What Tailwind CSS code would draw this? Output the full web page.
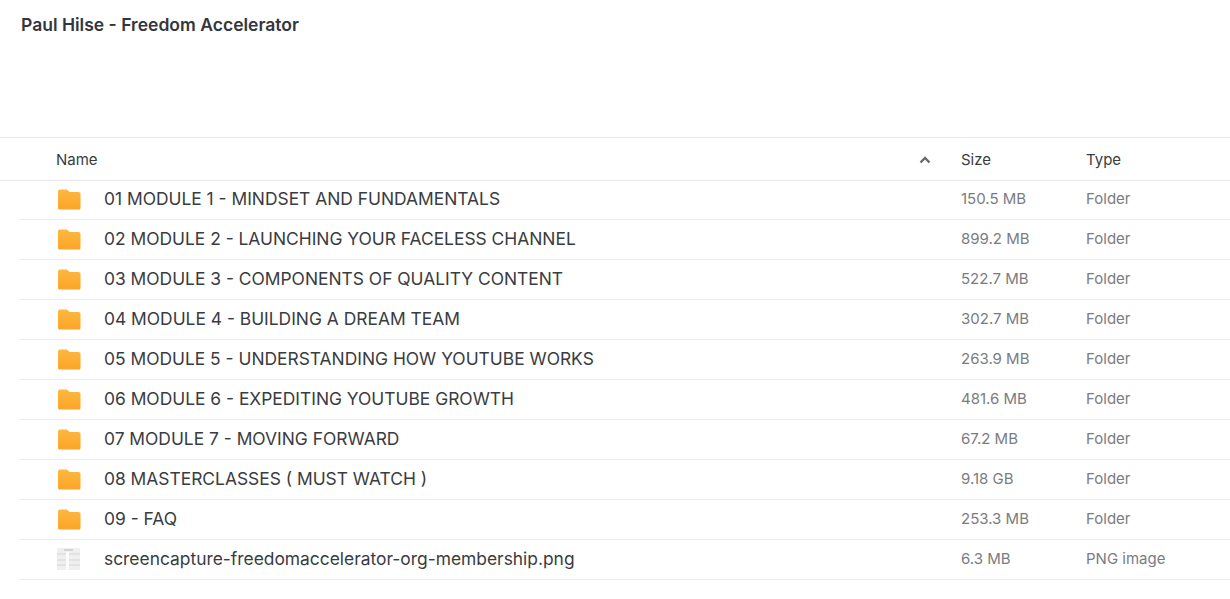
<!DOCTYPE html>
<html lang="en">
<head>
  <meta charset="UTF-8" />
  <title>Paul Hilse - Freedom Accelerator</title>
  <script src="https://cdn.jsdelivr.net/npm/@tailwindcss/browser@4"></script>
</head>
<body class="bg-white font-['Inter',sans-serif] text-[#3a3c41] overflow-hidden h-[599px]">

  <svg class="absolute w-0 h-0">
    <defs>
      <linearGradient id="folderFill" x1="0" y1="0" x2="0" y2="1">
        <stop offset="0" stop-color="#fdb83f"/>
        <stop offset="1" stop-color="#fba528"/>
      </linearGradient>
      <filter id="soft"><feGaussianBlur stdDeviation="0.5"/></filter>
    </defs>
  </svg>

  <div class="h-[137px] pl-[21px] pt-[14px]">
    <h1 class="text-[17.55px] leading-[22px] font-semibold text-[#34363b]">Paul Hilse - Freedom Accelerator</h1>
  </div>

  <div class="h-[44px] flex items-center border-y border-[#e8e8e8] pl-[56px] text-[15px] pt-[2px]">
    <div class="w-[862px]">Name</div>
    <svg class="w-[14px] h-[10px] mr-[29px]" viewBox="0 0 14 10"><path d="M2.500 7.500 L7 3 L11.500 7.500" fill="none" stroke="#6a6a6a" stroke-width="2.400"/></svg>
    <div class="w-[125px]">Size</div>
    <div>Type</div>
  </div>

  <div id="rows" class="ml-[19px]"></div>

  <script>
    const items = [
      ["01 MODULE 1 - MINDSET AND FUNDAMENTALS", "150.5 MB"],
      ["02 MODULE 2 - LAUNCHING YOUR FACELESS CHANNEL", "899.2 MB"],
      ["03 MODULE 3 - COMPONENTS OF QUALITY CONTENT", "522.7 MB"],
      ["04 MODULE 4 - BUILDING A DREAM TEAM", "302.7 MB"],
      ["05 MODULE 5 - UNDERSTANDING HOW YOUTUBE WORKS", "263.9 MB"],
      ["06 MODULE 6 - EXPEDITING YOUTUBE GROWTH", "481.6 MB"],
      ["07 MODULE 7 - MOVING FORWARD", "67.2 MB"],
      ["08 MASTERCLASSES ( MUST WATCH )", "9.18 GB"],
      ["09 - FAQ", "253.3 MB"],
    ];

    const folderIcon = `<svg class="w-[24px] h-[21px] ml-[38px] mr-[23px]" viewBox="0 0 24 21"><path d="M1 2.500 Q1 .5 3 .5 H9 Q10 .5 11 1.500 L12.500 3 H21.500 Q23.500 3 23.500 5 V19 Q23.500 20.500 22 20.500 H2.500 Q1 20.500 1 19 Z" fill="url(#folderFill)"/></svg>`;

    const imageIcon = `<svg class="w-[24px] h-[23px] ml-[38px] mr-[23px]" viewBox="0 0 24 23"><g filter="url(#soft)">
      <rect x="0" y="0" width="23" height="22" fill="#efefef"/>
      <rect x="0" y="5" width="23" height="2" fill="#e2e2e2"/>
      <rect x="0" y="11" width="23" height="2" fill="#e2e2e2"/>
      <rect x="0" y="16" width="23" height="2" fill="#e2e2e2"/>
      <rect x="9" y="4" width="3" height="18" fill="#fbfbfb"/>
      <rect x="7" y="1" width="9" height="2" fill="#d4d4d4"/>
    </g></svg>`;

    function rowHtml(icon, nameClass, name, size, type, rowClass) {
      return `<div class="${rowClass} flex items-center border-b border-[#ececec]">
        ${icon}
        <div class="w-[857px] ${nameClass}">${name}</div>
        <div class="w-[125px] text-[15px] text-[#7a7c81]">${size}</div>
        <div class="text-[15px] text-[#7a7c81]">${type}</div>
      </div>`;
    }

    const rows = items.map((it, i) =>
      rowHtml(folderIcon, "text-[17.4px]", it[0], it[1], "Folder", i === 0 ? "h-[39px] pb-[1px]" : "h-[40px] pb-[1px]")
    );
    rows.push(rowHtml(imageIcon, "text-[17.4px]", "screencapture-freedomaccelerator-org-membership.png", "6.3 MB", "PNG image", "h-[40px] pb-[1px]"));
    document.getElementById("rows").innerHTML = rows.join("");
  </script>
</body>
</html>
